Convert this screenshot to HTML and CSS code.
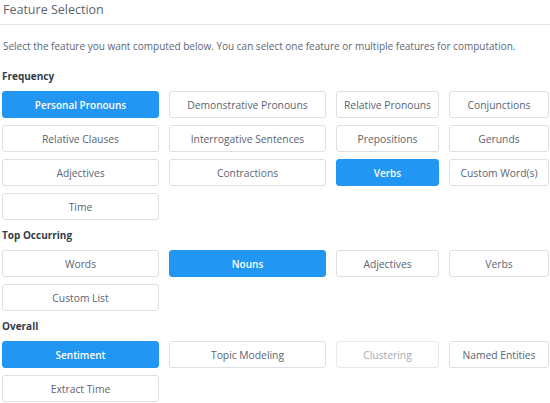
FILE: index.html
```html
<!DOCTYPE html>
<html>
<head>
<meta charset="utf-8">
<link rel="stylesheet" href="styles.css">
</head>
<body>
<div class="panel">
  <div class="title">Feature Selection</div>
  <p class="desc">Select the feature you want computed below. You can select one feature or multiple features for computation.</p>

  <div class="section first">
    <div class="label">Frequency</div>
    <div class="grid">
      <button class="btn active">Personal Pronouns</button>
      <button class="btn">Demonstrative Pronouns</button>
      <button class="btn">Relative Pronouns</button>
      <button class="btn">Conjunctions</button>
      <button class="btn">Relative Clauses</button>
      <button class="btn">Interrogative Sentences</button>
      <button class="btn">Prepositions</button>
      <button class="btn">Gerunds</button>
      <button class="btn">Adjectives</button>
      <button class="btn">Contractions</button>
      <button class="btn active">Verbs</button>
      <button class="btn">Custom Word(s)</button>
      <button class="btn">Time</button>
    </div>
  </div>

  <div class="section">
    <div class="label">Top Occurring</div>
    <div class="grid">
      <button class="btn">Words</button>
      <button class="btn active">Nouns</button>
      <button class="btn">Adjectives</button>
      <button class="btn">Verbs</button>
      <button class="btn">Custom List</button>
    </div>
  </div>

  <div class="section">
    <div class="label">Overall</div>
    <div class="grid">
      <button class="btn active">Sentiment</button>
      <button class="btn">Topic Modeling</button>
      <button class="btn disabled">Clustering</button>
      <button class="btn">Named Entities</button>
      <button class="btn">Extract Time</button>
    </div>
  </div>
</div>
</body>
</html>
```

FILE: styles.css
```css
html, body {
  margin: 0;
  padding: 0;
  background: #ffffff;
}
body {
  font-family: "Open Sans", "Noto Sans", sans-serif;
  color: #5b6573;
}
.panel {
  width: 550px;
}
.title {
  font-size: 12.5px;
  line-height: 20px;
  color: #5a6472;
  padding-left: 3px;
  padding-bottom: 4px;
  border-bottom: 1px solid #e3e5e8;
}
.desc {
  margin: 13px 0 0 0;
  padding-left: 3px;
  font-size: 10px;
  line-height: 16px;
  color: #5d6674;
}
.section {
  margin-top: 7px;
}
.section.first {
  margin-top: 14px;
}
.label {
  font-size: 10px;
  font-weight: 700;
  line-height: 16px;
  color: #343c48;
  padding-left: 2px;
}
.grid {
  display: grid;
  grid-template-columns: 157px 157px 103px 100px;
  column-gap: 10px;
  row-gap: 7px;
  margin-top: 7px;
  padding-left: 2px;
}
.btn {
  height: 27px;
  margin: 0;
  padding: 0;
  border: 1px solid #dcdfe3;
  border-radius: 3px;
  background: #ffffff;
  font-family: "Open Sans", "Noto Sans", sans-serif;
  font-size: 10.3px;
  color: #5a6472;
  white-space: nowrap;
}
.btn.active {
  background: #2196f3;
  border-color: #2196f3;
  color: #ffffff;
  font-weight: 600;
  font-size: 10px;
}
.btn.disabled {
  color: #a3abb4;
  border-color: #e6e8eb;
}
```
